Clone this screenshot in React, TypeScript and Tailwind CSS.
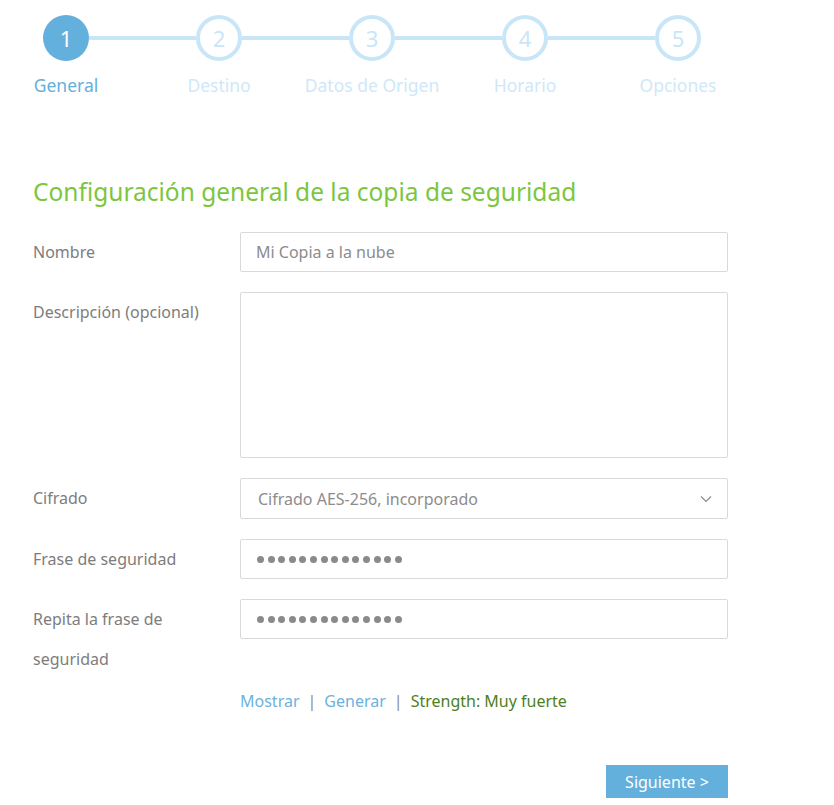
import React from 'react';

const steps = ['General', 'Destino', 'Datos de Origen', 'Horario', 'Opciones'];

function Dots() {
  return (
    <div className="flex items-center gap-[3.6px]">
      {Array.from({ length: 14 }).map((_, i) => (
        <span key={i} className="block w-[7px] h-[7px] rounded-full bg-[#8a8a8a]" />
      ))}
    </div>
  );
}

function Row({ label, children, className = '' }: { label: React.ReactNode; children: React.ReactNode; className?: string }) {
  return (
    <div className={`flex items-start ${className}`}>
      <div className="w-[207px] shrink-0 text-[16px] leading-[40px] text-[#7d7d7d]">{label}</div>
      <div className="w-[488px]">{children}</div>
    </div>
  );
}

export default function App() {
  return (
    <main className="w-[834px] h-[805px] bg-white overflow-hidden" style={{ fontFamily: '"Noto Sans", Roboto, sans-serif' }}>
      {/* stepper */}
      <div className="flex items-start pl-[43px] pt-[15px]">
        {steps.map((s, i) => (
          <React.Fragment key={s}>
            {i > 0 && <div className="w-[107px] h-[4px] mt-[21px] bg-[#c9e6f8]" />}
            <div className="flex flex-col items-center w-[46px]">
              <div
                className={
                  i === 0
                    ? 'w-[46px] h-[46px] rounded-full bg-[#64b0dc] flex items-center justify-center text-white text-[22px] leading-none'
                    : 'w-[46px] h-[46px] rounded-full border-[4px] border-[#c9e6f8] bg-white flex items-center justify-center text-[#c9e6f8] text-[22px] leading-none'
                }
              >
                {i + 1}
              </div>
              <div className={`mt-[12px] whitespace-nowrap text-[17.5px] leading-[24px] ${i === 0 ? 'text-[#64b0dc]' : 'text-[#cfe8f8]'}`}>{s}</div>
            </div>
          </React.Fragment>
        ))}
      </div>

      <section className="pl-[33px] pt-[79px]">
        <h2 className="text-[24.5px] leading-[32px] text-[#7cc63f]">Configuración general de la copia de seguridad</h2>

        <div className="mt-[24px] flex flex-col gap-[20px]">
          <Row label="Nombre">
            <input
              readOnly
              placeholder="Mi Copia a la nube"
              className="w-full h-[40px] border border-[#d9d9d9] rounded-[2px] px-[15px] text-[16px] outline-none placeholder:text-[#8c8c8c]"
            />
          </Row>
          <Row label="Descripción (opcional)">
            <textarea readOnly className="block w-full h-[166px] border border-[#d9d9d9] rounded-[2px] resize-none outline-none" />
          </Row>
          <Row label="Cifrado">
            <div className="h-[41px] border border-[#d9d9d9] rounded-[2px] pl-[17px] pr-[15px] flex items-center justify-between text-[16px] text-[#8c8c8c]">
              <span>Cifrado AES-256, incorporado</span>
              <svg width="12" height="8" viewBox="0 0 12 8" fill="none">
                <path d="M1 1.5l5 5 5-5" stroke="#8c8c8c" strokeWidth="1.2" />
              </svg>
            </div>
          </Row>
          <Row label="Frase de seguridad">
            <div className="h-[40px] border border-[#d9d9d9] rounded-[2px] pl-[16px] flex items-center">
              <Dots />
            </div>
          </Row>
          <Row label={<>Repita la frase de<br />seguridad</>}>
            <div className="h-[40px] border border-[#d9d9d9] rounded-[2px] pl-[16px] flex items-center">
              <Dots />
            </div>
          </Row>
        </div>

        <div className="ml-[207px] mt-[10px] flex items-center gap-[8px] text-[16px] leading-[24px]">
          <span className="text-[#6cb2e0]">Mostrar</span>
          <span className="text-[#8c8c8c]">|</span>
          <span className="text-[#6cb2e0]">Generar</span>
          <span className="text-[#8c8c8c]">|</span>
          <span className="text-[#4d7f22]">Strength: Muy fuerte</span>
        </div>

        <div className="w-[695px] flex justify-end mt-[52px]">
          <button className="w-[122px] h-[33px] bg-[#64b0dc] text-white text-[16px]">Siguiente &gt;</button>
        </div>
      </section>
    </main>
  );
}
